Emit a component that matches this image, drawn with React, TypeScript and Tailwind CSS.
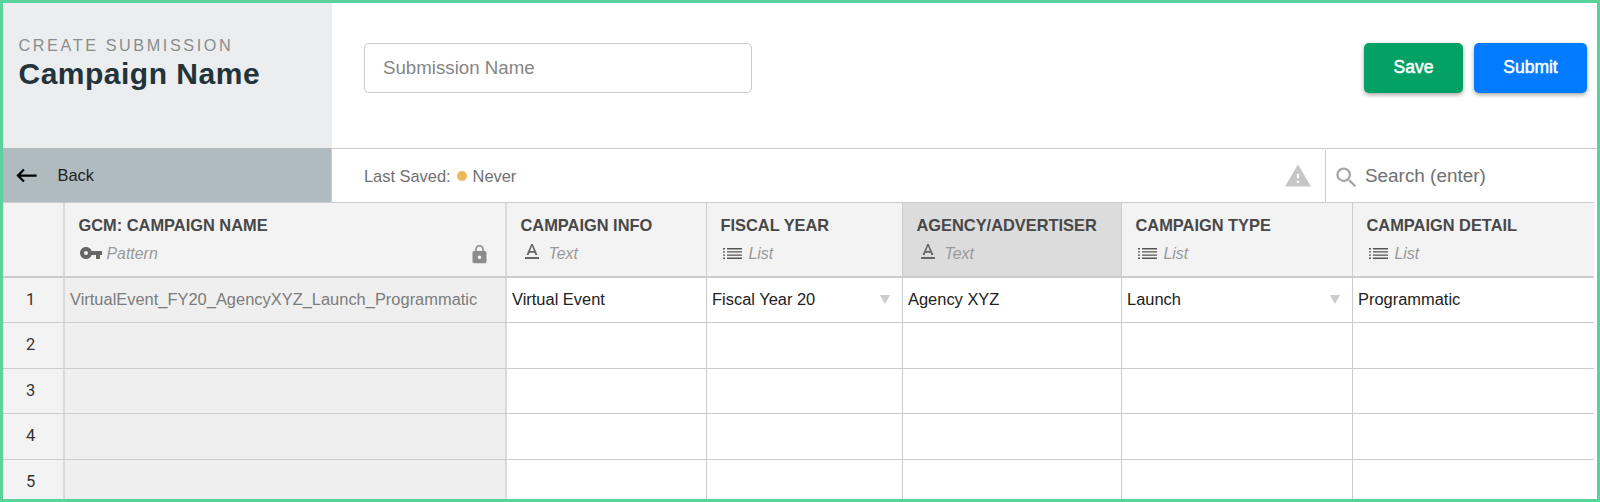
import { MdKeyboardBackspace, MdLock, MdSearch, MdTextFormat, MdVpnKey, MdWarning } from "react-icons/md";

type Kind = "Pattern" | "Text" | "List";

type Column = {
  title: string;
  kind: Kind;
  value: string;
  locked?: boolean;
  active?: boolean;
  dropdown?: boolean;
};

const columns: Column[] = [
  {
    title: "GCM: CAMPAIGN NAME",
    kind: "Pattern",
    value: "VirtualEvent_FY20_AgencyXYZ_Launch_Programmatic",
    locked: true,
  },
  { title: "CAMPAIGN INFO", kind: "Text", value: "Virtual Event" },
  { title: "FISCAL YEAR", kind: "List", value: "Fiscal Year 20", dropdown: true },
  { title: "AGENCY/ADVERTISER", kind: "Text", value: "Agency XYZ", active: true },
  { title: "CAMPAIGN TYPE", kind: "List", value: "Launch", dropdown: true },
  { title: "CAMPAIGN DETAIL", kind: "List", value: "Programmatic" },
];

const rows = [1, 2, 3, 4, 5];

const gridCols = "grid grid-cols-[62px_442px_200px_196px_219px_231px_241px]";

function ListIcon() {
  return (
    <svg width="19" height="11" viewBox="0 0 19 11" fill="#555" className="mb-[2px] ml-[2px] shrink-0">
      <path d="M0 0h2v1.4H0zM0 3.2h2v1.4H0zM0 6.4h2v1.4H0zM0 9.6h2V11H0zM4 0h15v1.4H4zM4 3.2h15v1.4H4zM4 6.4h15v1.4H4zM4 9.6h15V11H4z" />
    </svg>
  );
}

function KindIcon({ kind }: { kind: Kind }) {
  if (kind === "Pattern") return <MdVpnKey size={24} className="mb-[3px] shrink-0 text-[#666]" />;
  if (kind === "Text") return <MdTextFormat size={24} className="mb-[4px] -ml-px shrink-0 text-[#666]" />;
  return <ListIcon />;
}

function ColumnHead({ column }: { column: Column }) {
  return (
    <div
      className={`pt-[12px] pl-[13.5px] last:border-r-0 ${
        column.locked ? "border-r-2 border-[#dadada]" : "border-r border-[#ccc]"
      } ${column.active ? "bg-[#dcdcdc]" : "bg-[#f3f3f3]"}`}
    >
      <div className="text-[16.4px] leading-[20px] font-bold whitespace-nowrap text-[#484848]">{column.title}</div>
      <div className="mt-[9px] flex h-5 items-center pr-[15px] text-[15.9px] text-[#999]">
        <KindIcon kind={column.kind} />
        <span className={`italic ${column.kind === "Text" ? "ml-[5px]" : column.kind === "List" ? "ml-[7px]" : "ml-[4px]"}`}>
          {column.kind}
        </span>
        {column.locked && <MdLock size={21} className="ml-auto text-[#8c8c8c]" />}
      </div>
    </div>
  );
}

function Header() {
  return (
    <header className="flex h-[145px] shrink-0">
      <div className="w-[329px] bg-[#ebedee] pt-[32px] pl-[15.5px]">
        <div className="text-[16.2px] leading-[20px] tracking-[2.6px] text-[#8c8c8c]">CREATE SUBMISSION</div>
        <h1 className="text-[30px] leading-[37px] font-bold tracking-[0.5px] text-[#22333b]">Campaign Name</h1>
      </div>
      <div className="flex flex-1 items-start justify-between pt-[40px] pr-[10px] pl-[32px]">
        <input
          placeholder="Submission Name"
          className="h-[50px] w-[388px] rounded-[5px] border border-[#ccc] px-[18px] pb-px text-[18.7px] placeholder:text-[#858585]"
        />
        <div className="flex gap-[11px] text-[17.5px] text-white [-webkit-text-stroke:0.5px_white]">
          <button className="h-[50px] w-[99px] rounded-[5px] bg-[#04a167] pb-px shadow-[0_2px_4px_rgba(0,0,0,0.35)]">Save</button>
          <button className="h-[50px] w-[113px] rounded-[5px] bg-[#017bff] pb-px shadow-[0_2px_4px_rgba(0,0,0,0.35)]">Submit</button>
        </div>
      </div>
    </header>
  );
}

function Toolbar() {
  return (
    <div className="flex h-[54px] shrink-0">
      <a className="flex w-[329px] items-center border-r border-[#ccc] bg-[#b0bbc0] pl-[10px] text-[16.4px] text-[#222]">
        <MdKeyboardBackspace size={27} className="mt-px text-black" />
        <span className="ml-[17.5px]">Back</span>
      </a>
      <div className="flex flex-1 items-center border-t border-[#ccc] pl-[32px] text-[16.4px] text-[#707070]">
        <span className="mt-px">Last Saved:</span>
        <span className="mx-[6px] mt-px size-[10px] rounded-full bg-[#eab95d]" />
        <span className="mt-px">Never</span>
        <MdWarning size={28} className="mr-[13px] ml-auto text-[#c6c6c6]" />
        <div className="mt-px flex h-[52px] w-[272px] items-center border-l border-[#ccc] pl-[7px]">
          <MdSearch size={27} className="mt-[2px] text-[#a5a5a5]" />
          <span className="ml-[5px] text-[18.9px]">Search (enter)</span>
        </div>
      </div>
    </div>
  );
}

function Sheet() {
  return (
    <div className="w-[1591px] shrink-0 border-t border-[#ccc]">
      <div className={`${gridCols} h-[75px] border-b-2 border-[#ccc]`}>
        <div className="border-r-2 border-[#dadada] bg-[#f3f3f3]" />
        {columns.map((column) => (
          <ColumnHead key={column.title} column={column} />
        ))}
      </div>
      {rows.map((row) => (
        <div
          key={row}
          className={`${gridCols} border-b border-[#ccc] text-[16.45px] ${row === 1 ? "h-[45px]" : "h-[45.6px]"}`}
        >
          <div className="flex items-center justify-center border-r-2 border-[#dadada] bg-[#f3f3f3] pr-[5px] font-[Roboto] text-[#333]">
            {row}
          </div>
          {columns.map((column) => (
            <div
              key={column.title}
              className={`flex items-center justify-between pr-[12px] pb-[2px] pl-[5px] whitespace-nowrap last:border-r-0 ${
                column.locked
                  ? "border-r-2 border-[#dadada] bg-[#efefef] text-[#7c7c7c]"
                  : "border-r border-[#ccc] bg-white text-[#222]"
              }`}
            >
              {row === 1 && <span>{column.value}</span>}
              {row === 1 && column.dropdown && (
                <svg width="10" height="9" viewBox="0 0 10 9" fill="#ccc">
                  <path d="M0 0h10L5 9z" />
                </svg>
              )}
            </div>
          ))}
        </div>
      ))}
    </div>
  );
}

export default function App() {
  return (
    <div className="flex h-[502px] w-[1600px] flex-col overflow-hidden border-3 border-[#5bd19c] bg-white font-['Liberation_Sans',Arial,sans-serif]">
      <Header />
      <Toolbar />
      <Sheet />
    </div>
  );
}
